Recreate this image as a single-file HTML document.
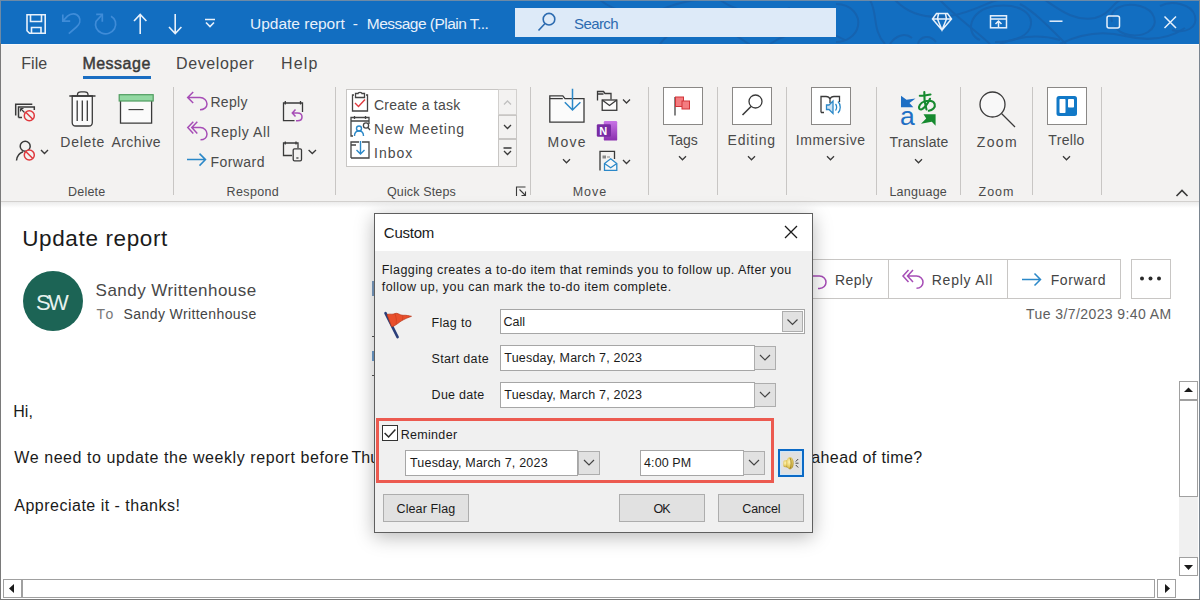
<!DOCTYPE html>
<html><head><meta charset="utf-8">
<style>
*{margin:0;padding:0;box-sizing:border-box}
html,body{width:1200px;height:600px;overflow:hidden;background:#fff}
body{position:relative;font-family:"Liberation Sans",sans-serif;-webkit-font-smoothing:antialiased}
.a{position:absolute}
.t{position:absolute;line-height:1;white-space:nowrap}
.sep{position:absolute;width:1px;top:87px;height:108px;background:#c8c6c4}
svg{position:absolute;overflow:visible}
.bx{position:absolute;background:#fff;border:1px solid #a6a6a6}
.dd{position:absolute;background:#e1e1e1;border:1px solid #adadad}
.btn{position:absolute;background:#e1e1e1;border:1px solid #adadad}
</style></head><body>
<!-- title bar -->
<div class="a" style="left:0;top:0;width:1200px;height:44px;background:#126ec1"></div>
<svg style="left:0;top:0" width="1200" height="44">
 <g fill="none" stroke="#1563b0" stroke-width="2">
  <path d="M600 0 C615 12 640 18 660 10 C675 4 690 0 700 0"/>
  <path d="M660 44 C670 30 690 22 712 26 C735 30 745 44 750 44"/>
  <path d="M720 0 C740 14 770 18 790 8"/>
  <path d="M770 44 C790 30 820 26 845 40"/>
  <path d="M836 4 C852 4 860 16 858 26 C856 36 846 42 836 42"/>
  <path d="M870 0 C878 14 872 30 885 44"/>
  <path d="M895 0 C905 10 920 20 950 16 C975 12 990 0 1000 0"/>
  <path d="M890 44 C895 36 905 32 912 38 M918 44 C920 36 930 34 936 42"/>
  <path d="M940 0 C955 16 975 30 990 44"/>
  <path d="M980 40 C965 34 968 10 995 6 C1020 3 1035 14 1030 28 C1026 38 1010 42 995 42"/>
  <path d="M1020 4 C1035 12 1050 28 1066 44"/>
  <path d="M1045 0 C1060 10 1075 22 1095 18 C1110 14 1112 4 1120 0"/>
  <path d="M1112 22 C1108 8 1125 2 1140 6 C1155 10 1160 24 1148 32 C1138 38 1120 36 1115 26"/>
  <path d="M1060 44 C1080 34 1100 30 1125 36 C1150 42 1170 38 1185 28"/>
  <path d="M1160 6 C1172 0 1192 4 1195 16 C1198 28 1185 34 1172 30"/>
  <path d="M1000 44 C1020 36 1040 34 1060 40"/>
 </g>
</svg>
<div class="a" style="left:0;top:0;width:1200px;height:1px;background:#6d8aa6"></div>
<!-- QAT -->
<svg style="left:0;top:0" width="240" height="43">
 <g fill="none" stroke="#e8f1fb" stroke-width="1.6">
  <path d="M27 14.8 H45.2 V33.2 H29.5 L27 30.7 Z"/>
  <path d="M30.5 15 V21.5 H41.5 V15"/>
  <path d="M31.5 33 V27.5 H41 V33"/>
 </g>
 <g fill="none" stroke="#3f8cd8" stroke-width="1.7">
  <path d="M62.8 14.4 V21.2 H70.2 M62.8 21.2 L67.5 16.2 C71 12.8 76.5 13 79 17 C81 20.5 79.5 24.5 76.5 27 L68.8 33.6"/>
  <path d="M111 16.2 C115.5 18.5 117 24 114.5 28.8 C112 33 106.5 35 101.5 33 C96.5 31 94.5 26 96 21.5 L102.3 14.5"/>
  <path d="M96.2 14.4 H102.3 V21.7"/>
 </g>
 <g fill="none" stroke="#e8f1fb" stroke-width="1.6">
  <path d="M140.2 34 V15 M134 21 L140.2 14.5 L146.4 21"/>
  <path d="M175.2 14 V33.5 M169 27 L175.2 33.5 L181.4 27"/>
  <path d="M205 19.5 H215 M206 22.5 L210 26.5 L214 22.5"/>
 </g>
</svg>
<!-- search -->
<div class="a" style="left:515px;top:8px;width:321px;height:29px;background:#ddeaf8"></div>
<svg style="left:0;top:0" width="1200" height="43">
 <g fill="none" stroke="#2c6bb0" stroke-width="1.6">
  <circle cx="549" cy="19.2" r="5.8"/>
  <path d="M545 23.5 L538.5 30.5"/>
 </g>
 <g fill="none" stroke="#e8f1fb" stroke-width="1.5">
  <path d="M936.5 13.5 H947.5 L951.5 19 L942 30 L932.5 19 Z M932.5 19 H951.5 M938.5 13.5 L937.5 19 L942 30 L946.5 19 L945.5 13.5"/>
  <rect x="990.5" y="15.8" width="16" height="12"/>
  <path d="M990.5 19 H1006.5 M998.5 27.5 V21 M995.5 24 L998.5 21 L1001.5 24"/>
  <path d="M1049.5 21.2 H1062.5"/>
  <rect x="1107" y="16" width="12.5" height="12" rx="2"/>
  <path d="M1164.5 16.5 L1176 28 M1176 16.5 L1164.5 28"/>
 </g>
</svg>
<!-- ribbon -->
<div class="a" style="left:0;top:44px;width:1200px;height:157px;background:#f3f2f1"></div>
<div class="a" style="left:0;top:44px;width:1200px;height:1px;background:#f9f9f9"></div>
<div class="a" style="left:0;top:201px;width:1200px;height:1px;background:#d2d0ce"></div>
<div class="a" style="left:0;top:202px;width:1200px;height:6px;background:linear-gradient(#ececec,#fff)"></div>
<div class="a" style="left:83px;top:76px;width:68px;height:3px;background:#1a6ec2"></div>
<div class="sep" style="left:173px"></div>
<div class="sep" style="left:335px"></div>
<div class="sep" style="left:530px"></div>
<div class="sep" style="left:648px"></div>
<div class="sep" style="left:717px"></div>
<div class="sep" style="left:786px"></div>
<div class="sep" style="left:876px"></div>
<div class="sep" style="left:960px"></div>
<div class="sep" style="left:1032px"></div>
<div class="sep" style="left:1101px"></div>
<!-- quick steps box -->
<div class="a" style="left:346px;top:89px;width:171px;height:78px;background:#fff;border:1px solid #c8c6c4"></div>
<div class="a" style="left:498px;top:89px;width:19px;height:26px;background:#f3f2f1;border:1px solid #d2d0ce"></div>
<div class="a" style="left:498px;top:115px;width:19px;height:24px;background:#f3f2f1;border:1px solid #c8c6c4"></div>
<div class="a" style="left:498px;top:139px;width:19px;height:28px;background:#f3f2f1;border:1px solid #c8c6c4"></div>
<!-- boxes for tags/editing/immersive/trello -->
<div class="a" style="left:663px;top:87px;width:40px;height:38px;background:#fff;border:1px solid #8a8886"></div>
<div class="a" style="left:732px;top:87px;width:40px;height:38px;background:#fff;border:1px solid #8a8886"></div>
<div class="a" style="left:811px;top:87px;width:40px;height:38px;background:#fff;border:1px solid #8a8886"></div>
<div class="a" style="left:1047px;top:87px;width:40px;height:38px;background:#fff;border:1px solid #8a8886"></div>
<svg style="left:0;top:0" width="1200" height="210">
 <g fill="none" stroke="#3a3a3a" stroke-width="1.3">
  <!-- ignore -->
  <path d="M15.7 115.5 V104.2 H32.3" stroke-width="1.5"/>
  <path d="M18.5 117.5 V107 H34.3 V110 M18.5 117.5 H22" stroke-width="1.5"/>
  <path d="M20.5 108.5 L24.5 112.5 M20.5 108.5 V111.5 M20.5 108.5 H23.5" stroke-width="1.1"/>
  <!-- junk person -->
  <path d="M16.5 160.5 C17 156 19.5 153 23 151.8" stroke-width="1.5"/>
  <circle cx="25.2" cy="146.3" r="5" stroke-width="1.5"/>
  <path d="M41 150 L44.5 153.5 L48 150" stroke-width="1.4"/>
  <!-- trash -->
  <path d="M72.2 96 V122.5 C72.2 124.7 73.8 126 75.8 126 H88.8 C90.8 126 92.3 124.7 92.3 122.5 V96 Z" fill="#fbfbfb"/>
  <path d="M69.3 96 H95.5 M77.5 96 V94.5 C77.5 92.5 79 91.8 81 91.8 H84.5 C86.5 91.8 88 92.5 88 94.5 V96 M77.2 100.5 V121 M82.3 100.5 V121 M87.3 100.5 V121"/>
  <!-- archive -->
  <path d="M120.5 101 V123.2 H151.6 V101" fill="#fbfbfb"/>
  <path d="M128.5 109.6 H143.5" stroke-width="1.1"/>
  <!-- meeting reply cal -->
  <path d="M294.5 120.7 H283.5 V103 H302.5 V112 M285.3 101 V104.5 M300.5 101 V104.5"/>
  <!-- teams device -->
  <path d="M292 155.5 H283.5 V143 H298 V148 M285.3 141.5 V144.5 M296 141.5 V144.5"/>
  <rect x="293.2" y="148.8" width="8.3" height="12" rx="1.3"/>
  <path d="M296.3 158 H298.5"/>
  <path d="M308.6 150 L312.3 153.5 L316 150"/>
  <!-- chevrons -->
  <path d="M563 159.3 L566.5 162.8 L570 159.3 M679 156.3 L682.5 159.8 L686 156.3 M748 156.3 L751.5 159.8 L755 156.3 M827 156.3 L830.5 159.8 L834 156.3 M915 159.3 L918.5 162.8 L922 159.3 M1063 156.3 L1066.5 159.8 L1070 156.3"/>
  <path d="M623 99.5 L626.5 103 L630 99.5 M623 160 L626.5 163.5 L630 160"/>
  <path d="M1176.5 196 L1182 190.5 L1187.5 196" stroke-width="1.6"/>
  <!-- quick step scroll -->
  <path d="M504 104.5 L507.5 101 L511 104.5" stroke="#c0c0c0"/>
  <path d="M504 125 L507.5 128.5 L511 125"/>
  <path d="M503.5 148 H511.5 M504 151 L507.5 154.5 L511 151"/>
  <!-- dialog launcher -->
  <path d="M516.5 196 V187 H525.5 M519.5 189.5 L525.5 195.5 M525.5 191.5 V195.5 H521.5" stroke-width="1.1"/>
  <!-- move folder -->
  <path d="M549.8 95.8 H562.8 L565 98.6 H584 V122.2 H549.8 Z" fill="#fbfbfb"/>
  <path d="M549.8 98.6 H562.8"/>
  <!-- rules -->
  <path d="M597.5 100.5 V91.5 H603.5 L605 93.5 H611 V99.5 M597.5 94 H603.5"/>
  <rect x="602.2" y="100" width="14.6" height="10.3" fill="#fbfbfb"/>
  <path d="M602.2 100 L609.5 105.5 L616.8 100"/>
  <!-- send to -->
  <path d="M600 170.5 V151.3 H614.5 V159"/>
  <!-- magnifier editing -->
  <circle cx="755.5" cy="101.5" r="6.5"/>
  <path d="M751 106.5 L742.5 115" stroke-width="1.6"/>
  <!-- immersive -->
  <path d="M821 112.5 V96.5 H826 C828 96.5 829.5 97.5 830 99 C830.5 97.5 832 96.5 834 96.5 H839.5 V102 M821 112.5 H824 M830 99 V103"/>
  <!-- zoom -->
  <circle cx="992.5" cy="104.5" r="12.5" fill="#f8f8f8"/>
  <path d="M1001.5 113.5 L1015 127"/>
 </g>
 <!-- ignore red circle -->
 <g fill="none" stroke="#e0393e" stroke-width="1.5">
  <circle cx="29.3" cy="115.8" r="5" fill="#f3f2f1"/><path d="M25.8 112.3 L32.8 119.3"/>
  <circle cx="29.3" cy="155" r="5" fill="#f3f2f1"/><path d="M25.8 151.5 L32.8 158.5"/>
 </g>
 <!-- archive green -->
 <rect x="119.2" y="94.7" width="34" height="6.3" fill="#92d8a2" stroke="#4f9d5f" stroke-width="1.2"/>
 <!-- reply icons purple -->
 <g fill="none" stroke="#a64db6" stroke-width="1.5">
  <path d="M193.2 92 L187.7 97.5 L193.2 103 M187.7 97.5 H200 C204 97.5 207 100.5 207 104 C207 107.3 204 109.8 200 109.8"/>
  <path d="M197.3 121.8 L191.8 127.6 L197.3 133.4 M191.8 127.6 H200.5 C204 127.6 207 130.5 207 134 C207 137.3 204.3 139.8 200.5 139.8 M193.3 121.8 L187.8 127.6 L193.3 133.4"/>
  <path d="M295.5 116.5 L292.3 113 L295.5 109.5 M292.3 113 H297.5 C300 113 302 114.5 302 117 C302 119.5 300 120.8 297.5 120.8 H296"/>
 </g>
 <!-- forward blue -->
 <g fill="none" stroke="#2b88c8" stroke-width="1.5">
  <path d="M187 159.6 H205.5 M199.5 153.6 L205.5 159.6 L199.5 165.6"/>
  <!-- move arrow -->
  <path d="M572.5 88.8 V110 M564.8 102.3 L572.5 110 L580.4 102.3"/>
 </g>
 <!-- quick steps icons -->
 <g fill="none" stroke="#444" stroke-width="1.3">
  <path d="M354 95 H352.5 V111 H367.5 V95 H366 M355.5 97.5 V93.5 H358 C358 92 362 92 362 93.5 H364.5 V97.5 Z"/>
  <path d="M351 124 V117.5 H369 V124 M354.5 116 V119 M365.5 116 V119 M351 117.5 V136 H353 M351 121 H369"/>
  <path d="M351 158 V142 H359 M362 142 H369 V158 H351 M351 145 H356"/>
 </g>
 <path d="M355 103 L358.5 106.5 L365 99.5" fill="none" stroke="#e0393e" stroke-width="1.4"/>
 <g fill="none" stroke="#2b88c8" stroke-width="1.4">
  <circle cx="359" cy="128.5" r="2.5"/><path d="M354.5 136 C354.5 132.5 356.5 131 359 131 C361.5 131 363.5 132.5 363.5 136"/>
  <path d="M360.5 141 V154 M356.5 150 L360.5 154 L364.5 150"/>
 </g>
 <g fill="none" stroke="#444" stroke-width="1.3"><circle cx="366" cy="125.5" r="2.6"/><path d="M368 127.5 L370 130"/></g>
 <!-- flag tags -->
 <g>
  <path d="M675 97 V115.5" stroke="#444" stroke-width="1.3"/>
  <rect x="675.5" y="97" width="8" height="9.5" fill="#f47c80" stroke="#d13438" stroke-width="1"/>
  <rect x="682" y="101" width="7.5" height="8" fill="#f47c80" stroke="#d13438" stroke-width="1"/>
 </g>
 <!-- onenote -->
 <defs><linearGradient id="onb" x1="0" y1="0" x2="0" y2="1"><stop offset="0" stop-color="#c874e6"/><stop offset="1" stop-color="#8a2fae"/></linearGradient></defs>
 <rect x="603.8" y="121" width="13.4" height="19.6" rx="1.2" fill="url(#onb)"/>
 <rect x="596.8" y="124.3" width="14.2" height="12.5" rx="1.3" fill="#7a2ca3"/>
 <text x="599.3" y="134.9" font-family="Liberation Sans" font-weight="bold" font-size="11" fill="#fff">N</text>
 <!-- send to env -->
 <rect x="602.5" y="155.5" width="3.5" height="3" fill="#8a8a8a"/>
 <path d="M607 157 H610" stroke="#8a8a8a" stroke-width="1"/>
 <g fill="none" stroke="#2b88c8" stroke-width="1.3">
  <path d="M604.5 170.3 V163.5 L610.7 158.8 L616.8 163.5 V170.3 Z" fill="#f8f8f8"/><path d="M604.5 163.5 L610.7 167.8 L616.8 163.5"/>
 </g>
 <!-- immersive speaker -->
 <g fill="none" stroke="#2b88c8" stroke-width="1.3">
  <path d="M826.5 105 H829 L833 101 V113.5 L829 109.5 H826.5 Z" fill="#cfe4f5"/>
  <path d="M835.5 104 C837 105.5 837 109 835.5 110.5 M838 101.5 C841 104.5 841 110 838 113"/>
 </g>
 <!-- translate -->
 <g>
  <path d="M901 95.7 L906.5 99.8 L915.5 98.5 L909.5 103 L913.3 107.3 L901 107.3 Z" fill="#1e6fc4"/>
  <text x="900" y="125.2" font-family="Liberation Sans" font-size="26.5" fill="#1e6fc4">a</text>
  <g fill="none" stroke="#168a2f" stroke-width="2.1" stroke-linecap="round">
   <path d="M919.8 95.8 C923 96 927 95.2 930.5 94.5"/>
   <path d="M924.3 92 C924 97 924.5 103 926.5 109.5"/>
   <path d="M930 98.8 C928 103 924.5 108 921.8 109.2 C919 110.3 918.3 107.5 919.8 105 C922 101.5 927 100.3 931 101 C935 101.8 936 106 933.5 108.5 C932 110 930.3 110.6 928.8 110.8"/>
  </g>
  <path d="M923.5 114.2 L935.6 114.2 L935.6 125.8 L931.8 121.8 L921 123.8 L926.2 118.4 Z" fill="#168a2f"/>
 </g>
 <!-- trello -->
 <rect x="1056.5" y="96" width="20.5" height="20" rx="2.5" fill="#1279c7"/>
 <rect x="1059.5" y="99" width="6" height="14" rx="0.8" fill="#fff"/>
 <rect x="1068" y="99" width="6" height="8.5" rx="0.8" fill="#fff"/>
</svg>
<!-- message header -->
<div class="a" style="left:23px;top:271px;width:60px;height:60px;border-radius:50%;background:#1c6455"></div>
<div class="a" style="left:760px;top:259px;width:361px;height:40px;border:1px solid #c8c6c4;background:#fff"></div>
<div class="a" style="left:888px;top:259px;width:1px;height:40px;background:#c8c6c4"></div>
<div class="a" style="left:1007px;top:259px;width:1px;height:40px;background:#c8c6c4"></div>
<div class="a" style="left:1131px;top:259px;width:40px;height:40px;border:1px solid #c8c6c4;background:#fff"></div>
<svg style="left:0;top:0" width="1200" height="600">
 <g fill="none" stroke="#a64db6" stroke-width="1.5">
  <path d="M812 270 L806 276 L812 282 M806 276 H819.5 C823.5 276 826 279 826 282.2 C826 285.5 823.5 288.5 819.5 288.5 H818"/>
  <path d="M913 270 L907.5 276 L913 282 M907.5 276 H916.5 C920.5 276 923 279 923 282.2 C923 285.5 920.5 288.3 916.5 288.3 M908.5 270 L903 276 L908.5 282"/>
 </g>
 <path d="M1022 279.5 H1040.5 M1034.5 273.5 L1040.5 279.5 L1034.5 285.5" fill="none" stroke="#2b88c8" stroke-width="1.5"/>
 <g fill="#2a2a2a"><circle cx="1142" cy="278.5" r="2"/><circle cx="1150.5" cy="278.5" r="2"/><circle cx="1159" cy="278.5" r="2"/></g>
</svg>
<div id="ttl1" class="t" style="left:250.00px;top:16.47px;font-size:15.5px;color:#e8f1fb;letter-spacing:-0.008px;">Update report</div>
<div id="ttl2" class="t" style="left:352.80px;top:16.47px;font-size:15.5px;color:#e8f1fb;letter-spacing:0.000px;">-</div>
<div id="ttl3" class="t" style="left:366.80px;top:16.47px;font-size:15.5px;color:#e8f1fb;letter-spacing:-0.522px;">Message (Plain T...</div>
<div id="srch" class="t" style="left:574.00px;top:16.20px;font-size:15px;color:#2c6bb0;letter-spacing:-0.600px;">Search</div>
<div id="tFile" class="t" style="left:21.30px;top:55.85px;font-size:16px;color:#454545;letter-spacing:0.000px;">File</div>
<div id="tMsg" class="t" style="left:82.40px;top:55.85px;font-size:16px;color:#3a3a3a;letter-spacing:0.500px;-webkit-text-stroke:0.45px #3a3a3a;">Message</div>
<div id="tDev" class="t" style="left:176.00px;top:55.85px;font-size:16px;color:#454545;letter-spacing:0.625px;">Developer</div>
<div id="tHelp" class="t" style="left:281.00px;top:55.85px;font-size:16px;color:#454545;letter-spacing:1.199px;">Help</div>
<div id="rDel" class="t" style="left:60.30px;top:135.25px;font-size:14px;color:#4a4a4a;letter-spacing:0.720px;">Delete</div>
<div id="rArc" class="t" style="left:111.50px;top:135.25px;font-size:14px;color:#4a4a4a;letter-spacing:0.399px;">Archive</div>
<div id="gDel" class="t" style="left:68.10px;top:185.82px;font-size:12.5px;color:#4a4a4a;letter-spacing:0.200px;">Delete</div>
<div id="rRep" class="t" style="left:210.40px;top:94.95px;font-size:14px;color:#4a4a4a;letter-spacing:0.300px;">Reply</div>
<div id="rRepA" class="t" style="left:210.40px;top:125.25px;font-size:14px;color:#4a4a4a;letter-spacing:0.625px;">Reply All</div>
<div id="rFwd" class="t" style="left:210.40px;top:155.15px;font-size:14px;color:#4a4a4a;letter-spacing:0.465px;">Forward</div>
<div id="gRes" class="t" style="left:226.60px;top:185.82px;font-size:12.5px;color:#4a4a4a;letter-spacing:0.366px;">Respond</div>
<div id="qTask" class="t" style="left:374.00px;top:98.25px;font-size:14px;color:#4a4a4a;letter-spacing:0.250px;">Create a task</div>
<div id="qMeet" class="t" style="left:374.00px;top:121.75px;font-size:14px;color:#4a4a4a;letter-spacing:0.840px;">New Meeting</div>
<div id="qInb" class="t" style="left:374.00px;top:145.95px;font-size:14px;color:#4a4a4a;letter-spacing:1.000px;">Inbox</div>
<div id="gQS" class="t" style="left:387.00px;top:185.82px;font-size:12.5px;color:#4a4a4a;letter-spacing:0.140px;">Quick Steps</div>
<div id="rMove" class="t" style="left:547.60px;top:135.25px;font-size:14px;color:#4a4a4a;letter-spacing:1.200px;">Move</div>
<div id="gMove" class="t" style="left:572.70px;top:185.82px;font-size:12.5px;color:#4a4a4a;letter-spacing:1.000px;">Move</div>
<div id="rTags" class="t" style="left:668.30px;top:133.15px;font-size:14px;color:#4a4a4a;letter-spacing:-0.068px;">Tags</div>
<div id="rEdit" class="t" style="left:727.60px;top:133.15px;font-size:14px;color:#4a4a4a;letter-spacing:0.767px;">Editing</div>
<div id="rImm" class="t" style="left:795.70px;top:133.15px;font-size:14px;color:#4a4a4a;letter-spacing:0.600px;">Immersive</div>
<div id="rTrans" class="t" style="left:889.50px;top:135.25px;font-size:14px;color:#4a4a4a;letter-spacing:0.125px;">Translate</div>
<div id="gLang" class="t" style="left:889.40px;top:185.82px;font-size:12.5px;color:#4a4a4a;letter-spacing:0.259px;">Language</div>
<div id="rZoom" class="t" style="left:976.80px;top:135.25px;font-size:14px;color:#4a4a4a;letter-spacing:1.334px;">Zoom</div>
<div id="gZoom" class="t" style="left:978.60px;top:185.82px;font-size:12.5px;color:#4a4a4a;letter-spacing:0.933px;">Zoom</div>
<div id="rTrel" class="t" style="left:1048.30px;top:133.15px;font-size:14px;color:#4a4a4a;letter-spacing:0.320px;">Trello</div>
<div id="subj" class="t" style="left:22.20px;top:228.02px;font-size:22.5px;color:#1b1b1b;letter-spacing:0.633px;">Update report</div>
<div id="sw" class="t" style="left:36.10px;top:291.75px;font-size:22px;color:#e6f2ee;letter-spacing:-2.800px;">SW</div>
<div id="from" class="t" style="left:95.60px;top:281.70px;font-size:17px;color:#484848;letter-spacing:0.460px;">Sandy Writtenhouse</div>
<div id="to" class="t" style="left:96.60px;top:307.05px;font-size:14px;color:#777;letter-spacing:1.800px;">To</div>
<div id="toN" class="t" style="left:123.60px;top:307.05px;font-size:14px;color:#444;letter-spacing:0.401px;">Sandy Writtenhouse</div>
<div id="bRep" class="t" style="left:835.00px;top:273.05px;font-size:14px;color:#444;letter-spacing:0.400px;">Reply</div>
<div id="bRepA" class="t" style="left:931.70px;top:273.05px;font-size:14px;color:#444;letter-spacing:0.775px;">Reply All</div>
<div id="bFwd" class="t" style="left:1050.70px;top:273.05px;font-size:14px;color:#444;letter-spacing:0.601px;">Forward</div>
<div id="hi" class="t" style="left:13.30px;top:403.65px;font-size:16px;color:#1a1a1a;letter-spacing:0.000px;">Hi,</div>
<div id="we" class="t" style="left:14.30px;top:450.15px;font-size:16px;color:#1a1a1a;letter-spacing:0.572px;">We need to update the weekly report before</div>
<div id="we2" class="t" style="left:351.50px;top:450.15px;font-size:16px;color:#1a1a1a;letter-spacing:0.000px;">Thursday. Can you send</div>
<div id="ahead" class="t" style="left:811.30px;top:450.15px;font-size:16px;color:#1a1a1a;letter-spacing:0.385px;">ahead of time?</div>
<div id="app" class="t" style="left:14.30px;top:497.85px;font-size:16px;color:#1a1a1a;letter-spacing:0.493px;">Appreciate it - thanks!</div>

<!-- scrollbars -->
<div class="a" style="left:1179px;top:381px;width:19px;height:195px;background:#f0f0f0"></div>
<div class="a" style="left:1179px;top:381px;width:19px;height:20px;background:#fff;border:1px solid #a0a0a0"></div>
<div class="a" style="left:1179px;top:399px;width:19px;height:98px;background:#fff;border:1px solid #a0a0a0;border-top:2px solid #a0a0a0"></div>
<div class="a" style="left:1179px;top:557px;width:19px;height:19px;background:#fff;border:1px solid #a0a0a0"></div>
<div class="a" style="left:3px;top:579px;width:1152px;height:19px;background:#fff;border:1px solid #a0a0a0"></div>
<div class="a" style="left:21px;top:579px;width:2px;height:19px;background:#a0a0a0"></div>
<div class="a" style="left:1157px;top:579px;width:19px;height:19px;background:#fff;border:1px solid #a0a0a0"></div>
<svg style="left:0;top:0" width="1200" height="600">
 <g fill="#1a1a1a">
  <path d="M1184 392 L1188.5 387.5 L1193 392 Z"/>
  <path d="M1184 565 L1188.5 570 L1193 565 Z"/>
  <path d="M14 584 L9 588.5 L14 593 Z"/>
  <path d="M1165 584 L1170 588.5 L1165 593 Z"/>
 </g>
</svg>
<!-- window frame -->
<div class="a" style="left:0;top:43px;width:1px;height:557px;background:#7a7a7a"></div>
<div class="a" style="left:1199px;top:0;width:1px;height:600px;background:#7a8590"></div>
<div class="a" style="left:0;top:599px;width:1200px;height:1px;background:#7a7a7a"></div>
<div class="a" style="left:0;top:0;width:1px;height:43px;background:#6d8aa6"></div>
<div class="a" style="left:372px;top:281px;width:2px;height:15px;background:#7d9fc4"></div>
<div class="a" style="left:372px;top:336px;width:2px;height:1px;background:#555"></div>
<div class="a" style="left:372px;top:351px;width:2px;height:10px;background:#6f9fcf"></div>
<div class="a" style="left:372px;top:375px;width:2px;height:1px;background:#555"></div>
<!-- dialog -->
<div class="a" style="left:374px;top:213px;width:439px;height:320px;background:#f0f0f0;border:1px solid #5f5f5f;box-shadow:0 4px 18px rgba(0,0,0,0.28)"></div>
<div class="a" style="left:375px;top:214px;width:437px;height:37px;background:#fff"></div>
<svg style="left:0;top:0" width="1200" height="600">
 <path d="M785 226 L797 238 M797 226 L785 238" fill="none" stroke="#1a1a1a" stroke-width="1.3"/>
 <!-- flag -->
 <path d="M385.5 313.2 L397.6 337.2" stroke="#2b3f7a" stroke-width="2.6" stroke-linecap="round"/>
 <path d="M387 314.5 C390 313.5 392.5 315 395 313.5 C397.5 312.3 400 315.5 403 315.3 C406 315 409 315.8 411.5 316.3 C408 317.5 405 318.8 402 320.5 C399 322.5 396 325 393 326.5 L391.5 326.5 Z" fill="#e94f2c" stroke="#b8361a" stroke-width="0.7"/>
 <path d="M395 314 C396 317 397 320 396 324 M402.5 315.5 C403 317 403 319 402 320.5" fill="none" stroke="#c23a1c" stroke-width="0.8" opacity="0.7"/>
</svg>
<div class="bx" style="left:500px;top:309px;width:305px;height:25px"></div>
<div class="dd" style="left:782px;top:311px;width:21px;height:21px"></div>
<div class="bx" style="left:500px;top:345px;width:255px;height:26px"></div>
<div class="dd" style="left:754px;top:346px;width:22px;height:24px"></div>
<div class="bx" style="left:500px;top:382px;width:255px;height:26px"></div>
<div class="dd" style="left:754px;top:383px;width:22px;height:24px"></div>
<div class="a" style="left:376px;top:418px;width:398px;height:65px;border:3px solid #ec5a50"></div>
<div class="a" style="left:382px;top:425px;width:16px;height:16px;border:1px solid #333;background:#fff"></div>
<div class="bx" style="left:405px;top:450px;width:173px;height:26px"></div>
<div class="dd" style="left:578px;top:451px;width:22px;height:24px"></div>
<div class="bx" style="left:640px;top:450px;width:104px;height:26px"></div>
<div class="dd" style="left:743px;top:451px;width:22px;height:24px"></div>
<div class="a" style="left:778px;top:449px;width:26px;height:28px;border:2px solid #0b6ac6;background:#e1e1e1;box-shadow:inset 0 0 0 1px #cfe6f8"></div>
<div class="btn" style="left:383px;top:494px;width:86px;height:28px"></div>
<div class="btn" style="left:619px;top:494px;width:86px;height:28px"></div>
<div class="btn" style="left:718px;top:494px;width:86px;height:28px"></div>
<svg style="left:0;top:0" width="1200" height="600">
 <g fill="none" stroke="#444" stroke-width="1.2">
  <path d="M787.5 319.5 L792.5 324.5 L797.5 319.5"/>
  <path d="M760 355 L765 360 L770 355"/>
  <path d="M760 392 L765 397 L770 392"/>
  <path d="M584 460 L589 465 L594 460"/>
  <path d="M749 460 L754 465 L759 460"/>
 </g>
 <path d="M384.6 433 L388.6 437 L395.4 429.6" fill="none" stroke="#2a2a2a" stroke-width="1.5"/>
 <!-- speaker -->
 <defs><radialGradient id="spk" cx="0.4" cy="0.4" r="0.7"><stop offset="0" stop-color="#fff4b8"/><stop offset="0.6" stop-color="#e2c75a"/><stop offset="1" stop-color="#9c7c1c"/></radialGradient></defs>
 <g>
  <path d="M784 460.5 C783 461.5 783 466 784 467 L788 467.5 L788 460 Z" fill="url(#spk)"/>
  <ellipse cx="790" cy="463.2" rx="3.6" ry="6.2" fill="url(#spk)"/>
  <path d="M790 458 C791.5 460 791.5 466.5 790 468.5" fill="none" stroke="#8a6d10" stroke-width="0.7"/>
  <path d="M795.8 461.5 L798.2 459 M795.5 463.2 H798.5 M795.8 465 L798.2 467.5" fill="none" stroke="#333" stroke-width="0.9"/>
 </g>
</svg>
<div id="date" class="t" style="left:1026.00px;top:307.05px;font-size:14px;color:#5e5e5e;letter-spacing:0.421px;">Tue 3/7/2023 9:40 AM</div>
<div id="dTitle" class="t" style="left:383.80px;top:225.20px;font-size:15px;color:#1a1a1a;letter-spacing:-0.240px;">Custom</div>
<div id="dL1" class="t" style="left:381.80px;top:263.62px;font-size:12.5px;color:#1a1a1a;letter-spacing:0.417px;">Flagging creates a to-do item that reminds you to follow up. After you</div>
<div id="dL2" class="t" style="left:381.80px;top:280.62px;font-size:12.5px;color:#1a1a1a;letter-spacing:0.435px;">follow up, you can mark the to-do item complete.</div>
<div id="dFlag" class="t" style="left:431.60px;top:316.82px;font-size:12.5px;color:#1a1a1a;letter-spacing:0.299px;">Flag to</div>
<div id="dStart" class="t" style="left:431.60px;top:352.82px;font-size:12.5px;color:#1a1a1a;letter-spacing:0.314px;">Start date</div>
<div id="dDue" class="t" style="left:431.60px;top:389.43px;font-size:12.5px;color:#1a1a1a;letter-spacing:0.259px;">Due date</div>
<div id="dCall" class="t" style="left:503.40px;top:316.32px;font-size:12.5px;color:#1a1a1a;letter-spacing:0.065px;">Call</div>
<div id="dSD" class="t" style="left:504.30px;top:351.82px;font-size:12.5px;color:#1a1a1a;letter-spacing:0.201px;">Tuesday, March 7, 2023</div>
<div id="dDD" class="t" style="left:504.30px;top:388.62px;font-size:12.5px;color:#1a1a1a;letter-spacing:0.201px;">Tuesday, March 7, 2023</div>
<div id="dRem" class="t" style="left:400.70px;top:428.52px;font-size:12.5px;color:#1a1a1a;letter-spacing:0.313px;">Reminder</div>
<div id="dRD" class="t" style="left:410.00px;top:456.52px;font-size:12.5px;color:#1a1a1a;letter-spacing:0.199px;">Tuesday, March 7, 2023</div>
<div id="dTime" class="t" style="left:644.00px;top:457.12px;font-size:12.5px;color:#1a1a1a;letter-spacing:0.101px;">4:00 PM</div>
<div id="dClr" class="t" style="left:396.50px;top:502.82px;font-size:12.5px;color:#1a1a1a;letter-spacing:0.112px;">Clear Flag</div>
<div id="dOK" class="t" style="left:653.40px;top:502.82px;font-size:12.5px;color:#1a1a1a;letter-spacing:-0.800px;">OK</div>
<div id="dCan" class="t" style="left:742.30px;top:502.82px;font-size:12.5px;color:#1a1a1a;letter-spacing:-0.120px;">Cancel</div>
</body></html>
